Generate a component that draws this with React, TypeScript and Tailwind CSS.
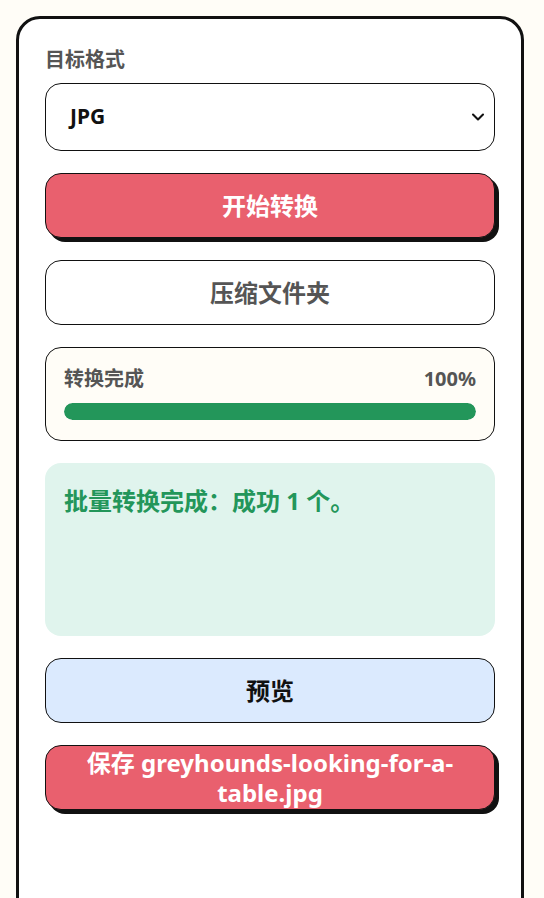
import { ChevronDown } from 'lucide-react'

export default function App() {
  return (
    <div
      className="min-h-screen bg-[#fffdf7] pt-[16px] pl-[16px]"
      style={{ fontFamily: '"Noto Sans", "Noto Sans CJK SC", sans-serif' }}
    >
      <div className="w-[508px] bg-white border-[3px] border-[#111] rounded-[24px] px-[26px] pt-[27px] pb-[120px]">
        <div className="text-[20px] leading-[28px] font-bold text-[#555] mb-[9px]">目标格式</div>

        {/* format select */}
        <div className="relative h-[68px] border border-[#111] rounded-[16px] bg-white flex items-center pl-[24px]">
          <span className="text-[21px] font-bold text-[#111]">JPG</span>
          <ChevronDown className="absolute right-[6px] top-1/2 -translate-y-1/2 h-[20px] w-[20px] text-[#111]" strokeWidth={2.5} />
        </div>

        <div className="flex flex-col gap-[22px] mt-[22px]">
          <button className="h-[65px] bg-[#e9606e] border border-[#111] rounded-[16px] shadow-[4px_4px_0_#111] text-white text-[24px] font-bold">
            开始转换
          </button>

          <button className="h-[65px] bg-white border border-[#111] rounded-[16px] text-[#555] text-[24px] font-bold">
            压缩文件夹
          </button>

          {/* progress */}
          <div className="bg-[#fffdf7] border border-[#111] rounded-[16px] px-[18px] pt-[17px] pb-[20px]">
            <div className="flex justify-between items-center text-[20px] leading-[28px] font-bold text-[#555]">
              <span>转换完成</span>
              <span>100%</span>
            </div>
            <div className="mt-[10px] h-[17px] rounded-full bg-[#e5e7eb] overflow-hidden">
              <div className="h-full rounded-full bg-[#23965a]" style={{ width: '100%' }} />
            </div>
          </div>

          <div className="min-h-[173px] bg-[#e0f4ed] rounded-[16px] px-[19px] pt-[21px]">
            <p className="text-[24px] leading-[34px] font-bold text-[#23965a]">批量转换完成：成功 1 个。</p>
          </div>

          <button className="h-[65px] bg-[#dbeafe] border border-[#111] rounded-[16px] text-[#111] text-[24px] font-bold">
            预览
          </button>

          <button className="min-h-[65px] bg-[#e9606e] border border-[#111] rounded-[16px] shadow-[4px_4px_0_#111] text-white text-[24px] leading-[30px] font-bold px-[18px]">
            保存 greyhounds-looking-for-a-table.jpg
          </button>
        </div>
      </div>
    </div>
  )
}
